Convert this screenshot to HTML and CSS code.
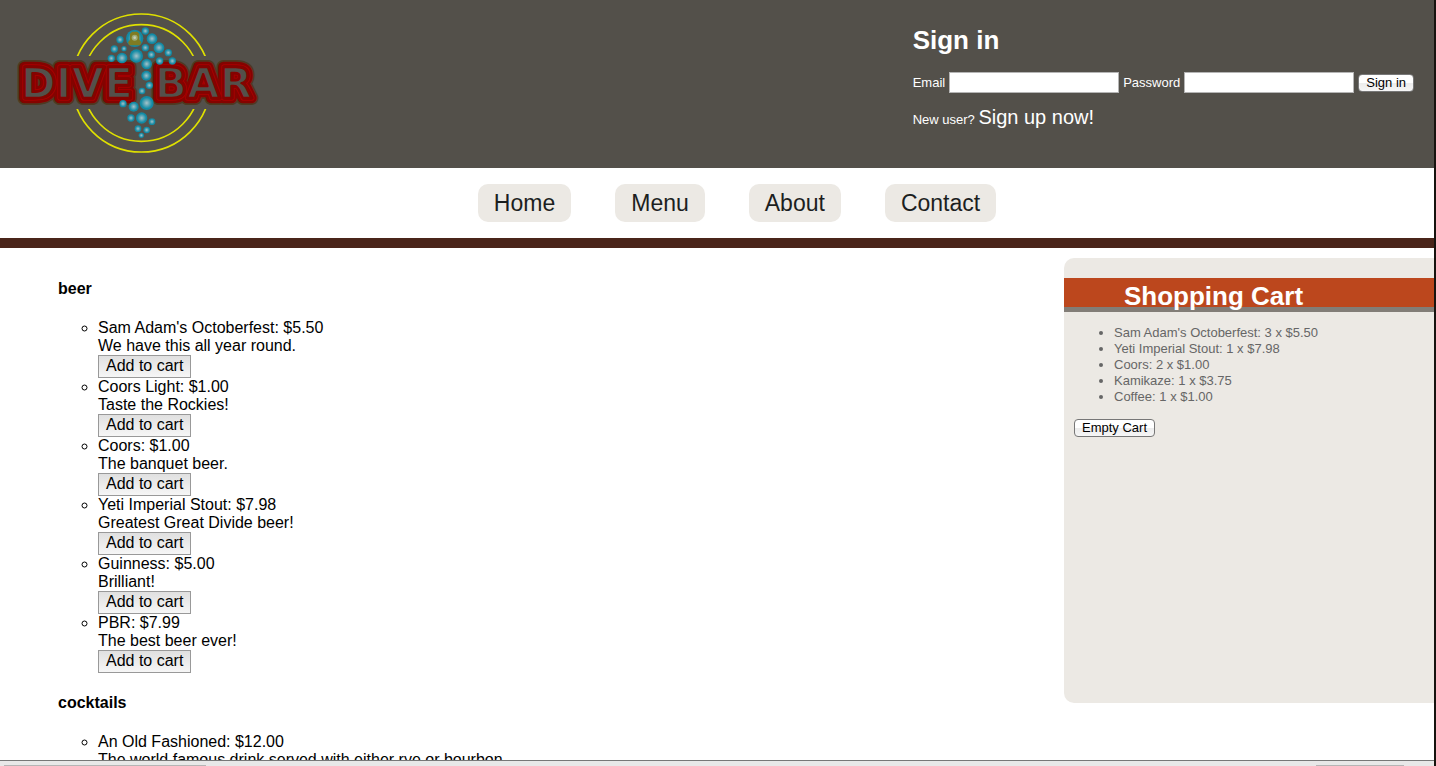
FILE: index.html
```html
<!DOCTYPE html>
<html lang="en">
<head>
  <meta charset="UTF-8" />
  <meta name="viewport" content="width=device-width, initial-scale=1" />
  <title>Dive Bar</title>
  <link rel="stylesheet" href="styles.css">
</head>
<body>

  <div class="page">
    <header class="header">
      <a href="#" class="logo" aria-label="Dive Bar">
        <svg viewBox="0 0 840 504" width="280" height="168">
          <defs>
            <radialGradient id="bubble">
              <stop offset="0" stop-color="#a5c4cb" />
              <stop offset="0.35" stop-color="#66a9b8" />
              <stop offset="0.8" stop-color="#118ba6" />
              <stop offset="1" stop-color="#118ba6" stop-opacity="0.9" />
            </radialGradient>
            <clipPath id="rings">
              <rect x="200" y="0" width="450" height="168" />
              <rect x="200" y="327" width="450" height="177" />
            </clipPath>
            <g id="name">
              <text x="62" y="293">DIVE</text>
              <text x="464" y="293">BAR</text>
            </g>
          </defs>

          <g class="rings" clip-path="url(#rings)">
            <circle cx="424" cy="249" r="207" />
            <circle cx="424" cy="249" r="175" />
          </g>

          <!-- neon lettering, widest stroke first -->
          <g class="neon">
            <use href="#name" class="neon-glow" />
            <use href="#name" class="neon-tube" />
            <use href="#name" class="neon-light" />
            <use href="#name" class="neon-core" />
            <use href="#name" class="neon-fill" />
          </g>

          <g fill="url(#bubble)">
            <circle cx="436" cy="93" r="11" />
            <circle cx="404" cy="115" r="26" />
            <circle cx="360" cy="119" r="11" />
            <circle cx="456" cy="116" r="16" />
            <circle cx="343" cy="147" r="11" />
            <circle cx="372" cy="146" r="8" />
            <circle cx="436" cy="143" r="11" />
            <circle cx="477" cy="143" r="16" />
            <circle cx="505" cy="158" r="11" />
            <circle cx="454" cy="164" r="11" />
            <circle cx="409" cy="168" r="20" />
            <circle cx="334" cy="175" r="11" />
            <circle cx="366" cy="174" r="16" />
            <circle cx="479" cy="183" r="11" />
            <circle cx="517" cy="183" r="11" />
            <circle cx="440" cy="192" r="16" />
            <circle cx="439" cy="227" r="15" />
            <circle cx="448" cy="256" r="11" />
            <circle cx="426" cy="273" r="10" />
            <circle cx="440" cy="309" r="21" />
            <circle cx="369" cy="311" r="11" />
            <circle cx="401" cy="320" r="15" />
            <circle cx="393" cy="354" r="11" />
            <circle cx="425" cy="354" r="17" />
            <circle cx="456" cy="365" r="10" />
            <circle cx="414" cy="386" r="10" />
            <circle cx="440" cy="390" r="10" />
            <circle cx="424" cy="406" r="8" />
          </g>
          <path d="M396 95 h16 l6 6 v18 l6 8 -4 9 h-32 l-4 -9 6 -8 v-18 z" fill="#7f7b22" />
          <circle cx="404" cy="113" r="9" fill="#9bab75" />
          <circle cx="404" cy="113" r="4" fill="#c9cdb5" />
        </svg>
      </a>

      <form class="signin">
        <h2>Sign in</h2>
        <div class="fields">
          <label for="email">Email</label>
          <input type="text" id="email" />
          <label for="password">Password</label>
          <input type="password" id="password" />
          <button type="button" class="btn">Sign in</button>
        </div>
        <p>New user? <a href="#">Sign up now!</a></p>
      </form>
    </header>

    <nav class="nav">
      <ul>
        <li><a href="#">Home</a></li>
        <li><a href="#">Menu</a></li>
        <li><a href="#">About</a></li>
        <li><a href="#">Contact</a></li>
      </ul>
    </nav>

    <div class="content">
      <main class="menu">
        <h4>beer</h4>
        <ul>
          <li>Sam Adam's Octoberfest: $5.50<br>We have this all year round.<br><button class="add">Add to cart</button></li>
          <li>Coors Light: $1.00<br>Taste the Rockies!<br><button class="add">Add to cart</button></li>
          <li>Coors: $1.00<br>The banquet beer.<br><button class="add">Add to cart</button></li>
          <li>Yeti Imperial Stout: $7.98<br>Greatest Great Divide beer!<br><button class="add">Add to cart</button></li>
          <li>Guinness: $5.00<br>Brilliant!<br><button class="add">Add to cart</button></li>
          <li>PBR: $7.99<br>The best beer ever!<br><button class="add">Add to cart</button></li>
        </ul>
        <h4>cocktails</h4>
        <ul>
          <li>An Old Fashioned: $12.00<br>The world famous drink served with either rye or bourbon.</li>
        </ul>
      </main>

      <aside class="cart">
        <h2>Shopping Cart</h2>
        <ul>
          <li>Sam Adam's Octoberfest: 3 x $5.50</li>
          <li>Yeti Imperial Stout: 1 x $7.98</li>
          <li>Coors: 2 x $1.00</li>
          <li>Kamikaze: 1 x $3.75</li>
          <li>Coffee: 1 x $1.00</li>
        </ul>
        <button class="btn">Empty Cart</button>
      </aside>
    </div>

    <div class="statusbar">
      <span class="tab tab-left"></span>
      <span class="tab tab-right"></span>
    </div>
  </div>

</body>
</html>
```
FILE: styles.css
```css
* {
  box-sizing: border-box;
}

body {
  margin: 0;
  background: #fff;
  color: #000;
  font-family: "Liberation Sans", Arial, Helvetica, sans-serif;
  font-size: 16px;
  line-height: 18px;
}

.page {
  display: flex;
  flex-direction: column;
  height: 100vh;
  overflow: hidden;
  border-right: 2px solid #17130f;
}

/* Header */
.header {
  display: flex;
  justify-content: space-between;
  flex-shrink: 0;
  background: #53504a;
  color: #fff;
}

.logo svg {
  display: block;
}

.rings {
  fill: none;
  stroke: #dfe000;
  stroke-width: 5px;
}

.neon {
  font-family: "DejaVu Sans", sans-serif;
  font-size: 127px;
  font-weight: bold;
  fill: none;
  stroke-linejoin: round;
}

.neon-glow {
  stroke: #4e3a22;
  stroke-width: 42px;
}

.neon-tube {
  stroke: #840300;
  stroke-width: 32px;
}

.neon-light {
  stroke: #a80000;
  stroke-width: 16px;
}

.neon-core {
  stroke: #840300;
  stroke-width: 10px;
}

.neon-fill {
  fill: #53504a;
  stroke: #840300;
  stroke-width: 7px;
}

.signin {
  padding: 25px 20px 0 0;
  font-size: 13px;
}

.signin h2 {
  margin: 0 0 17px;
  font-size: 26px;
  line-height: 30px;
}

.fields {
  display: flex;
  align-items: center;
  gap: 4px;
}

.fields input {
  width: 170px;
  height: 21px;
  padding: 2px;
  border: 1px solid #b5b5b5;
  background: #fff;
  font-family: inherit;
  font-size: 13px;
}

.signin p {
  margin: 12px 0 0;
  line-height: 24px;
}

.signin a {
  color: #fff;
  font-size: 20px;
  text-decoration: none;
}

.btn {
  height: 18px;
  padding: 0 7px;
  border: 1px solid #777;
  border-radius: 4px;
  background: linear-gradient(#fff 50%, #ececec 50%, #f6f6f6);
  color: #000;
  font-family: inherit;
  font-size: 13px;
  line-height: 16px;
}

/* Navigation */
.nav {
  flex-shrink: 0;
  padding: 16px 0;
  border-bottom: 10px solid #4a251a;
}

.nav ul {
  display: flex;
  justify-content: center;
  gap: 44px;
  margin: 0;
  padding: 0 0 0 40px;
  list-style: none;
}

.nav a {
  display: block;
  padding: 5px 16px;
  border-radius: 10px;
  background: #ece9e4;
  color: #1c1f1f;
  font-size: 23px;
  line-height: 28px;
  text-decoration: none;
}

/* Menu and cart */
.content {
  display: flex;
  flex: 1;
  align-items: flex-start;
  min-height: 0;
  overflow: hidden;
}

.menu {
  flex: 1;
  padding: 11px 0 0 58px;
}

.menu h4 {
  margin: 21px 0;
}

.menu ul {
  margin: 0;
  padding-left: 40px;
  list-style: circle;
}

.add {
  display: block;
  height: 23px;
  padding: 0 7px 2px;
  border: 1px solid #999;
  border-radius: 0;
  background: linear-gradient(#e0e0e0, #f6f6f6);
  color: #000;
  font-family: inherit;
  font-size: 16px;
  line-height: 18px;
}

.cart {
  width: 370px;
  min-height: 445px;
  margin-top: 10px;
  padding-top: 20px;
  border-radius: 10px 0 0 10px;
  background: #ece9e4;
  color: #666;
  font-size: 13px;
  line-height: 16px;
}

.cart h2 {
  margin: 0;
  padding: 8px 0 0 60px;
  border-bottom: 5px solid #827d77;
  background: #bc471d;
  color: #fff;
  font-size: 26px;
  line-height: 21px;
}

.cart ul {
  margin: 13px 0 14px;
  padding-left: 50px;
}

.cart .btn {
  margin-left: 10px;
}

/* Strip along the bottom edge */
.statusbar {
  display: flex;
  flex-shrink: 0;
  justify-content: space-between;
  align-items: flex-end;
  height: 6px;
  padding: 0 30px 0 4px;
  border-top: 1px solid #777;
  background: #e8e8e8;
}

.tab {
  height: 1px;
  background: #b5b5b5;
}

.tab-left {
  width: 202px;
}

.tab-right {
  width: 88px;
}
```
